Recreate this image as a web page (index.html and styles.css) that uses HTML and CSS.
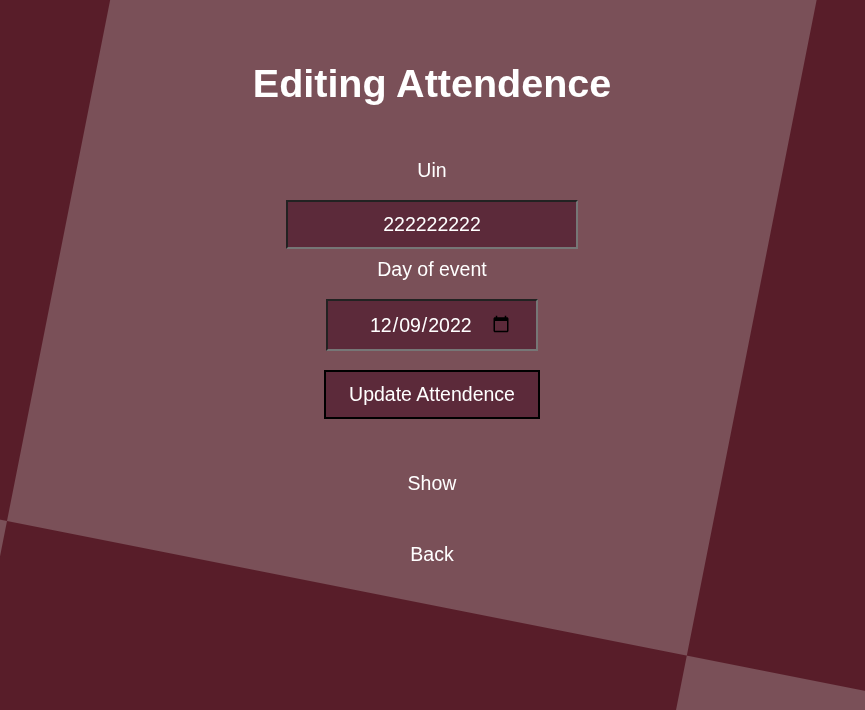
FILE: index.html
```html
<!DOCTYPE html>
<html lang="en">
<head>
<meta charset="utf-8">
<title>Editing Attendence</title>
<link rel="stylesheet" href="styles.css">
</head>
<body>
<div class="bg"></div>
<main class="page">
  <h1 class="title">Editing Attendence</h1>
  <form class="form">
    <label class="label label-uin" for="uin">Uin</label>
    <input class="field field-uin" id="uin" type="text" value="222222222">
    <label class="label label-day" for="day">Day of event</label>
    <span class="date-wrap">
      <input class="field field-date" id="day" type="date" value="2022-12-09">
      <svg class="cal-icon" viewBox="0 0 24 24" width="18" height="18" aria-hidden="true">
        <path fill="#000" d="M20 3h-1V1h-2v2H7V1H5v2H4c-1.1 0-2 .9-2 2v16c0 1.1.9 2 2 2h16c1.1 0 2-.9 2-2V5c0-1.1-.9-2-2-2zm0 18H4V8h16v13z"/>
      </svg>
    </span>
    <button class="submit" type="button">Update Attendence</button>
  </form>
  <a class="link link-show" href="#">Show</a>
  <a class="link link-back" href="#">Back</a>
</main>
</body>
</html>
```

FILE: styles.css
```css
html, body {
  margin: 0;
  padding: 0;
  height: 100%;
  overflow: hidden;
}

body {
  background: #581d29;
  font-family: "Liberation Sans", Arial, sans-serif;
  color: #ffffff;
}

.bg {
  position: fixed;
  left: -1493px;
  top: -979px;
  width: 3000px;
  height: 3000px;
  transform: rotate(11.2deg);
  transform-origin: 50% 50%;
  background-image: conic-gradient(from 0deg at 50% 50%, #7a5058 0 25%, #581d29 0 50%, #7a5058 0 75%, #581d29 0);
  background-size: 1386px 1386px;
  background-position: 807px 807px;
  z-index: 0;
}

.page {
  position: relative;
  z-index: 1;
  display: flex;
  flex-direction: column;
  align-items: center;
  padding-top: 61px;
  padding-right: 1px;
}

.title {
  margin: 0;
  font-size: 39.5px;
  line-height: 45px;
  font-weight: bold;
}

.form {
  display: flex;
  flex-direction: column;
  align-items: center;
  margin-top: 53px;
}

.label {
  font-size: 19.5px;
  line-height: 22px;
  display: block;
}

.field {
  box-sizing: border-box;
  font-family: "Liberation Sans", Arial, sans-serif;
  font-size: 19.5px;
  color: #ffffff;
  background: #5c2a3a;
  border: 2px solid #767676;
  border-top-color: #222222;
  border-left-color: #222222;
  text-align: center;
  margin: 0;
}

.field-uin {
  width: 292px;
  height: 49px;
  margin-top: 19px;
  padding: 0 8px;
}

.label-day {
  margin-top: 9px;
}

.date-wrap {
  position: relative;
  display: block;
  margin-top: 19px;
}

.field-date {
  display: block;
  width: 212px;
  height: 52px;
  text-align: left;
  padding: 0 10px 0 41px;
}

.field-date::-webkit-calendar-picker-indicator {
  display: none;
}

.cal-icon {
  position: absolute;
  left: 166px;
  top: 16px;
  pointer-events: none;
}

.submit {
  box-sizing: border-box;
  margin-top: 19px;
  width: 216px;
  height: 49px;
  font-family: "Liberation Sans", Arial, sans-serif;
  font-size: 19.5px;
  color: #ffffff;
  background: #5c2a3a;
  border: 2px solid #000000;
  padding: 0;
}

.link {
  color: #ffffff;
  text-decoration: none;
  font-size: 19.5px;
  line-height: 22px;
}

.link-show {
  margin-top: 53px;
}

.link-back {
  margin-top: 49px;
}
```
